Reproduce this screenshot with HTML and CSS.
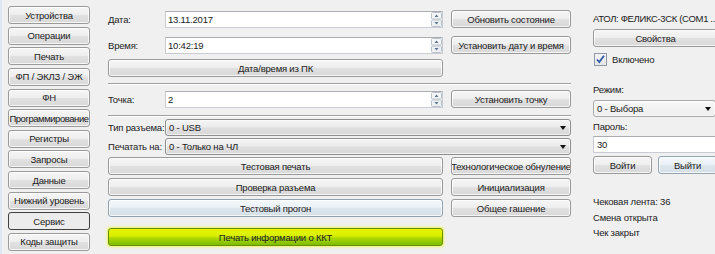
FILE: index.html
```html
<!DOCTYPE html>
<html lang="ru">
<head>
<meta charset="utf-8">
<title>Сервис</title>
<link rel="stylesheet" href="styles.css">
</head>
<body>
<div class="app">
  <nav class="nav">
    <div class="btn nav-btn">Устройства</div>
    <div class="btn nav-btn">Операции</div>
    <div class="btn nav-btn">Печать</div>
    <div class="btn nav-btn">ФП / ЭКЛЗ / ЭЖ</div>
    <div class="btn nav-btn">ФН</div>
    <div class="btn nav-btn nav-tight">Программирование</div>
    <div class="btn nav-btn">Регистры</div>
    <div class="btn nav-btn">Запросы</div>
    <div class="btn nav-btn">Данные</div>
    <div class="btn nav-btn">Нижний уровень</div>
    <div class="btn nav-btn is-active">Сервис</div>
    <div class="btn nav-btn">Коды защиты</div>
  </nav>

  <main class="main">
    <div class="row row-date">
      <span class="label">Дата:</span>
      <div class="field"><span class="val">13.11.2017</span>
        <svg class="spin" width="11" height="15" viewBox="0 0 11 15"><rect x="0.5" y="0.5" width="10" height="6.5" rx="1" fill="#f4f6f8" stroke="#b9c1c9"/><rect x="0.5" y="8" width="10" height="6.5" rx="1" fill="#eef1f4" stroke="#b9c1c9"/><path d="M3.5 5h4L5.5 2.5z" fill="#5b7290"/><path d="M3.5 10h4L5.5 12.5z" fill="#5b7290"/></svg>
      </div>
      <div class="btn side-btn">Обновить состояние</div>
    </div>
    <div class="row row-time">
      <span class="label">Время:</span>
      <div class="field"><span class="val">10:42:19</span>
        <svg class="spin" width="11" height="15" viewBox="0 0 11 15"><rect x="0.5" y="0.5" width="10" height="6.5" rx="1" fill="#f4f6f8" stroke="#b9c1c9"/><rect x="0.5" y="8" width="10" height="6.5" rx="1" fill="#eef1f4" stroke="#b9c1c9"/><path d="M3.5 5h4L5.5 2.5z" fill="#5b7290"/><path d="M3.5 10h4L5.5 12.5z" fill="#5b7290"/></svg>
      </div>
      <div class="btn side-btn">Установить дату и время</div>
    </div>
    <div class="row row-pc">
      <div class="btn wide-btn">Дата/время из ПК</div>
    </div>
    <div class="sep sep-1"></div>
    <div class="row row-point">
      <span class="label">Точка:</span>
      <div class="field"><span class="val">2</span>
        <svg class="spin" width="11" height="15" viewBox="0 0 11 15"><rect x="0.5" y="0.5" width="10" height="6.5" rx="1" fill="#f4f6f8" stroke="#b9c1c9"/><rect x="0.5" y="8" width="10" height="6.5" rx="1" fill="#eef1f4" stroke="#b9c1c9"/><path d="M3.5 5h4L5.5 2.5z" fill="#5b7290"/><path d="M3.5 10h4L5.5 12.5z" fill="#5b7290"/></svg>
      </div>
      <div class="btn side-btn">Установить точку</div>
    </div>
    <div class="sep sep-2"></div>
    <div class="row row-combo row-type">
      <span class="label">Тип разъема:</span>
      <div class="combo combo-wide"><span class="val">0 - USB</span><span class="arrow"></span></div>
    </div>
    <div class="row row-combo row-print">
      <span class="label">Печатать на:</span>
      <div class="combo combo-wide"><span class="val">0 - Только на ЧЛ</span><span class="arrow"></span></div>
    </div>
    <div class="row row-btn row-test">
      <div class="btn wide-btn">Тестовая печать</div>
      <div class="btn side-btn">Технологическое обнуление</div>
    </div>
    <div class="row row-btn">
      <div class="btn wide-btn">Проверка разъема</div>
      <div class="btn side-btn">Инициализация</div>
    </div>
    <div class="row row-btn">
      <div class="btn wide-btn btn-hover">Тестовый прогон</div>
      <div class="btn side-btn">Общее гашение</div>
    </div>
    <div class="row row-green">
      <div class="btn wide-btn btn-green">Печать информации о ККТ</div>
    </div>
  </main>

  <aside class="side">
    <div class="text dev-name">АТОЛ: ФЕЛИКС-3СК (COM1 ...</div>
    <div class="btn props-btn">Свойства</div>
    <div class="check-row">
      <span class="checkbox"><svg width="11" height="11" viewBox="0 0 11 11"><path d="M2 5.5l2.3 2.6L9 1.8" fill="none" stroke="#2f5aa8" stroke-width="1.8"/></svg></span>
      <span>Включено</span>
    </div>
    <div class="text mode-label">Режим:</div>
    <div class="combo combo-side"><span class="val">0 - Выбора</span><span class="arrow"></span></div>
    <div class="text pass-label">Пароль:</div>
    <div class="field field-side"><span class="val">30</span></div>
    <div class="login-row">
      <div class="btn login-btn">Войти</div>
      <div class="btn login-btn btn-hover">Выйти</div>
    </div>
    <div class="text status-1">Чековая лента: 36</div>
    <div class="text status-2">Смена открыта</div>
    <div class="text status-3">Чек закрыт</div>
  </aside>
</div>
</body>
</html>
```

FILE: styles.css
```css
html, body {
  margin: 0;
  padding: 0;
}
body {
  width: 715px;
  height: 254px;
  overflow: hidden;
  background: #f0f0f0;
  font-family: "Liberation Sans", Arial, sans-serif;
  font-size: 9.5px;
  letter-spacing: -0.2px;
  color: #222;
}
.app {
  display: flex;
  align-items: flex-start;
  height: 254px;
  border-left: 2px solid #dfe8f2;
  box-sizing: border-box;
}

/* buttons */
.btn {
  box-sizing: border-box;
  height: 18px;
  border: 1px solid #9a9a9a;
  border-radius: 3px;
  background: linear-gradient(#f6f6f6, #eeeeee 48%, #e1e1e1 52%, #d8d8d8);
  box-shadow: inset 0 0 0 1px rgba(255, 255, 255, 0.75);
  display: flex;
  align-items: center;
  justify-content: center;
  white-space: nowrap;
  overflow: hidden;
  flex: none;
}
.btn-hover {
  border-color: #93a3b0;
  background: linear-gradient(#f4f8fb, #eaf1f6 48%, #dde6ed 52%, #d5dfe7);
}
.btn-green {
  border-color: #6a8f00;
  background: linear-gradient(#e8f600, #d6ee00 45%, #b0d800 55%, #7cbd00);
  box-shadow: 0 0 0 1px #eef48a, 0 0 3px 1px #f1f27a;
}

/* nav */
.nav {
  margin-left: 6px;
  padding-top: 6px;
  width: 82px;
  display: flex;
  flex-direction: column;
  gap: 2.64px;
  flex: none;
}
.nav-btn {
  width: 82px;
}
.nav-tight {
  letter-spacing: -0.45px;
  overflow: visible;
}
.is-active {
  border-color: #3f3f3f;
  background: #ececec;
  box-shadow: none;
}

/* main */
.main {
  margin-left: 18px;
  width: 463px;
  padding-top: 10px;
  display: flex;
  flex-direction: column;
  flex: none;
}
.row {
  display: flex;
  align-items: center;
  height: 18px;
}
.label {
  width: 57px;
  flex: none;
  white-space: nowrap;
}
.field {
  box-sizing: border-box;
  width: 278px;
  height: 17px;
  background: #fff;
  border: 1px solid #c9cdd3;
  border-top-color: #abadb3;
  display: flex;
  align-items: center;
  padding-left: 2px;
  flex: none;
}
.field .val {
  flex: 1;
}
.spin {
  flex: none;
}
.side-btn {
  width: 120px;
  margin-left: 8px;
}
.wide-btn {
  width: 335px;
}
.row-time { margin-top: 8px; }
.row-pc { margin-top: 5px; }
.sep {
  height: 0;
  border-top: 1px solid #a0a0a0;
  border-bottom: 1px solid #ffffff;
}
.sep-1 { margin-top: 6px; }
.row-point { margin-top: 5px; }
.sep-2 { margin-top: 7px; }
.row-combo { height: 17px; }
.row-type { margin-top: 2px; }
.row-print { margin-top: 2px; }
.row-btn { margin-top: 3px; }
.row-test { margin-top: 2px; }
.row-green { margin-top: 11px; }

/* combo */
.combo {
  box-sizing: border-box;
  height: 17px;
  border: 1px solid #8f8f8f;
  border-radius: 3px;
  background: linear-gradient(#f4f4f4, #ebebeb 48%, #dfdfdf 52%, #d9d9d9);
  box-shadow: inset 0 0 0 1px rgba(255, 255, 255, 0.6);
  display: flex;
  align-items: center;
  padding-left: 3px;
  padding-right: 4px;
}
.combo .val {
  flex: 1;
  white-space: nowrap;
  overflow: hidden;
}
.combo-wide {
  width: 406px;
  flex: none;
}
.arrow {
  width: 0;
  height: 0;
  border-left: 3.5px solid transparent;
  border-right: 3.5px solid transparent;
  border-top: 4px solid #111;
  flex: none;
}

/* side */
.side {
  margin-left: 22px;
  width: 125px;
  display: flex;
  flex-direction: column;
  flex: none;
}
.text {
  height: 12px;
  line-height: 12px;
  white-space: nowrap;
}
.dev-name {
  margin-top: 13px;
  letter-spacing: -0.35px;
}
.props-btn {
  margin-top: 4px;
  width: 125px;
}
.check-row {
  margin-top: 6px;
  height: 13px;
  display: flex;
  align-items: center;
  gap: 5px;
}
.checkbox {
  box-sizing: border-box;
  width: 13px;
  height: 13px;
  border: 1px solid #8e9aa8;
  background: linear-gradient(#f4f4f4, #e6e6e6);
  display: flex;
  align-items: center;
  justify-content: center;
  margin-left: 1px;
}
.mode-label { margin-top: 18px; }
.combo-side {
  margin-top: 4px;
  width: 123px;
  background: linear-gradient(#f7f7f7, #ededed);
  border-color: #a9a9a9;
}
.pass-label { margin-top: 4px; }
.field-side {
  margin-top: 3px;
  width: 125px;
  padding-left: 3px;
}
.login-row {
  margin-top: 3px;
  display: flex;
  gap: 6px;
}
.login-btn {
  width: 59px;
}
.status-1 { margin-top: 22px; }
.status-2 { margin-top: 4px; }
.status-3 { margin-top: 3px; }
```
